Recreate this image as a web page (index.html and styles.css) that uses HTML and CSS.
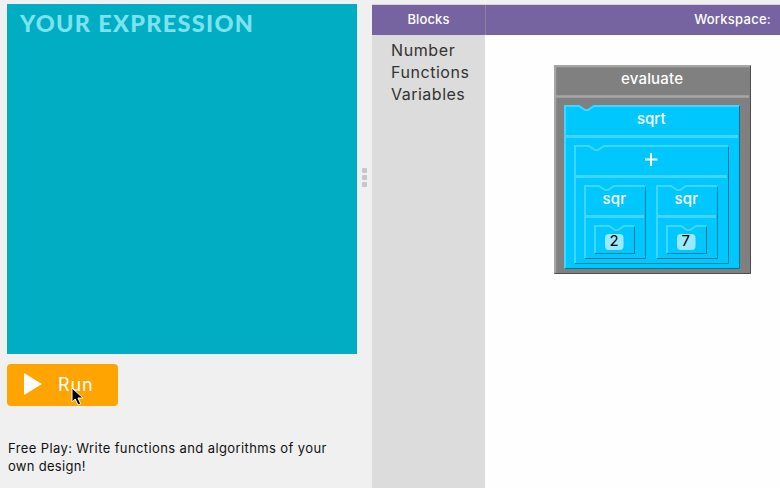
FILE: index.html
```html
<!DOCTYPE html>
<html lang="en">
<head>
<meta charset="utf-8">
<title>Free Play</title>
<link rel="stylesheet" href="styles.css">
</head>
<body>
<div class="app">
  <section class="left">
    <div class="stage"><svg class="stage-title" width="240" height="28"><text x="0" y="23.5" textLength="235">YOUR EXPRESSION</text></svg></div>
    <button class="run">
      <svg class="play" width="18" height="22"><path d="M0 0L18 11L0 22Z"/></svg>
      <span>Run</span>
      <svg class="cursor" width="14" height="20" viewBox="0 0 14 20"><path d="M1 1V15L4.2 12L7 18L9.7 16.8L7 11H12Z"/></svg>
    </button>
    <p class="hint"><span class="line1">Free Play: Write functions and algorithms of your</span><br><span class="line2">own design!</span></p>
  </section>
  <div class="grip"><i></i><i></i><i></i></div>
  <section class="editor">
    <header class="bar"><span class="bar-blocks">Blocks</span><span class="bar-work">Workspace:</span></header>
    <div class="body">
      <nav class="toolbox"><span class="num">Number</span><span class="fun">Functions</span><span class="var">Variables</span></nav>
      <main class="workspace">
        <svg class="blocks" width="197" height="209" viewBox="554 65 197 209">
          <path class="gray" d="M554 65H751V274H554Z"/>
          <path class="gray-hi" d="M555 273V66H750M556 96.5H749"/>
          <path class="gray-lo" d="M750.5 66V273.5H555"/>

          <path class="blue" d="M564 105H579L585 109H588L594 105H740V269H564Z"/>
          <path class="hi" d="M565 268V106H579L585 110H588L594 106H739"/>
          <path class="sep" d="M566 136.5H738"/>
          <path class="lo" d="M739.5 106V268.5H565"/>

          <path class="hi" d="M575 263V146H589L595 150H598L604 146H728"/>
          <path class="sep" d="M576 176.5H727"/>
          <path class="lo" d="M728.5 147V263.5H575"/>

          <g id="left-sqr">
            <path class="hi" d="M585 258V186H599L605 190H608L614 186H645"/>
            <path class="sep" d="M586 216.5H644"/>
            <path class="lo" d="M645.5 187V258.5H585"/>
            <path class="hi" d="M595 253V226H609L615 230H618L624 226H634"/>
            <path class="lo" d="M634.5 227V253.5H595"/>
            <rect class="field" x="605" y="234" width="18.5" height="16" rx="4"/>
            <text class="label" x="602.5" y="203.5" textLength="23.5">sqr</text>
          </g>
          <use href="#left-sqr" x="72"/>
          <text class="digit" x="609.5" y="246">2</text>
          <text class="digit" x="681.5" y="246">7</text>

          <text class="label" x="621" y="83.5" textLength="62">evaluate</text>
          <text class="label" x="637" y="123.5" textLength="28.5">sqrt</text>
          <path class="plus" d="M645 159.5H657.5M651 153V166"/>
        </svg>
      </main>
    </div>
  </section>
</div>
</body>
</html>
```

FILE: styles.css
```css
* { box-sizing: border-box; }
body {
  margin: 0;
  background: #f0f0f0;
  font-family: Inter, "Liberation Sans", sans-serif;
  overflow: hidden;
}
.app { display: flex; width: 780px; height: 488px; }
.left { width: 357px; padding: 4px 0 0 7px; }
.stage { height: 350px; background: #00adc3; padding: 4px 0 0 13px; }
.stage-title { display: block; overflow: visible; }
.stage-title text {
  font-family: Lato, sans-serif;
  font-weight: 900;
  font-size: 23.5px;
  letter-spacing: 2px;
  fill: #7be3ef;
}
.run {
  position: relative;
  display: flex;
  align-items: center;
  width: 111px;
  height: 42px;
  margin: 10px 0 0;
  padding: 0 0 0 17px;
  border: 0;
  border-radius: 4px;
  background: #ffa400;
  color: #fff;
  font: 400 18px Inter, sans-serif;
}
.run span { margin: -2px 0 0 16px; letter-spacing: .9px; }
.play { fill: #fff; margin-top: -2px; }
.cursor { position: absolute; left: 64px; top: 23px; }
.cursor path { fill: #000; stroke: #fff; stroke-width: 1; }
.hint { margin: 33px 0 0 1px; font-size: 13px; line-height: 18px; color: #111; white-space: nowrap; }
.line1 { letter-spacing: .39px; }
.line2 { letter-spacing: .3px; }
.grip {
  width: 15px;
  padding: 168px 0 0 5px;
  display: flex;
  flex-direction: column;
  gap: 2px;
}
.grip i { width: 5px; height: 5px; border-radius: 1px; background: #c5c8ca; }
.editor { width: 408px; padding-top: 4px; display: flex; flex-direction: column; }
.bar {
  display: flex;
  height: 31px;
  border-top: 1px solid #d5d3d9;
  background: #7664a1;
  color: #fff;
  font-size: 13px;
  font-weight: 500;
  line-height: 29px;
}
.bar-blocks { width: 114px; text-align: center; border-right: 1px solid #8a83a0; letter-spacing: .1px; }
.bar-work { flex: 1; text-align: right; padding-right: 9px; letter-spacing: .25px; }
.body { flex: 1; display: flex; }
.toolbox {
  width: 113px;
  padding: 4px 0 0 19px;
  background: #dcdcdc;
  color: #333;
  display: flex;
  flex-direction: column;
  font-size: 16px;
  line-height: 22px;
}
.num { letter-spacing: .6px; }
.fun { letter-spacing: .55px; }
.var { letter-spacing: .5px; }
.workspace { flex: 1; background: #fefefe; padding: 30px 0 0 69px; }
.blocks { display: block; }
.blocks path { fill: none; }
.blocks .gray { fill: #808080; }
.gray-hi { stroke: #a6a6a6; stroke-width: 2.5; }
.gray-lo { stroke: #4d4d4d; }
.blocks .blue { fill: #00c8ff; }
.hi { stroke: #40d6ff; stroke-width: 2; }
.sep { stroke: #40d6ff; stroke-width: 3; }
.lo { stroke: #007899; }
.field { fill: #99e9ff; }
.label { fill: #fff; font-size: 15px; font-weight: 500; }
.digit { fill: #000; font-size: 15px; }
.blocks .plus { stroke: #fff; stroke-width: 2; }
```
